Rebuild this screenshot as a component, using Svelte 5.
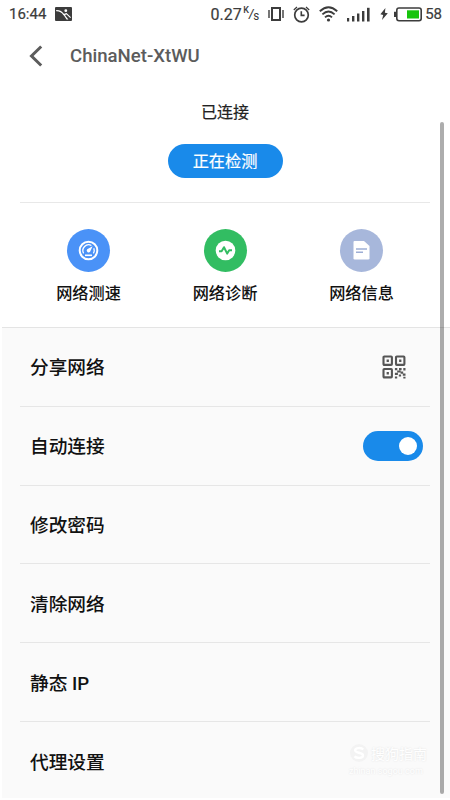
<script>
    let autoConnect = true;

    const tools = [
        { id: 'speed', label: '网络测速' },
        { id: 'diagnose', label: '网络诊断' },
        { id: 'info', label: '网络信息' }
    ];

    const settings = [
        { label: '分享网络', control: 'qr' },
        { label: '自动连接', control: 'switch' },
        { label: '修改密码' },
        { label: '清除网络' },
        { label: '静态 IP' },
        { label: '代理设置' }
    ];
</script>

<main>
    <div class="status">
        <span class="time">16:44</span>
        <svg class="photo" width="17" height="14" viewBox="0 0 17 14">
            <rect width="17" height="14" rx="1" fill="#3c3c3c"/>
            <path d="M1.2 3.6C4.6 3.4 7.2 5.2 8.8 7.6L11.4 6.6L15.6 10.6" fill="none" stroke="#fff" stroke-width="1.2"/>
            <path d="M8.3 7.4L10.6 6.9L10.2 8.6L13.4 12.4H11.6Z" fill="#fff"/>
            <circle cx="10.8" cy="3.7" r="1.4" fill="#fff"/>
        </svg>
        <span class="rate">0.27</span>
        <span class="unit"><sup>K</sup><i>/</i><sub>S</sub></span>
        <svg class="vibrate" width="16" height="14" viewBox="0 0 16 14">
            <rect x="4" y="1" width="8" height="12" fill="none" stroke="#3c3c3c" stroke-width="2"/>
            <path d="M1 3v8M15 3v8" stroke="#3c3c3c" stroke-width="1.4"/>
        </svg>
        <svg class="alarm" width="17" height="17" viewBox="0 0 17 17" fill="none" stroke="#3c3c3c">
            <circle cx="8.5" cy="9" r="6.8" stroke-width="1.7"/>
            <path d="M8.3 5.2v4.2h3.3" stroke-width="1.6"/>
            <path d="M.8 4L4 1.1M13 1.1L16.2 4" stroke-width="1.3"/>
        </svg>
        <svg class="wifi" width="19" height="16" viewBox="0 0 19 16" fill="none" stroke="#3c3c3c" stroke-width="1.9">
            <path d="M.8 5.2Q9.5-2.8 18.2 5.2M3.4 8.4Q9.5 2.8 15.6 8.4M6 11.4Q9.5 8.2 13 11.4"/>
            <circle cx="9.5" cy="14" r="1.6" fill="#3c3c3c" stroke="none"/>
        </svg>
        <svg class="signal" width="23" height="15" viewBox="0 0 23 15" fill="#3c3c3c">
            <rect x="0" y="11" width="2.2" height="3.5"/>
            <rect x="5" y="9" width="2.4" height="5.5"/>
            <rect x="10" y="6.5" width="2.4" height="8"/>
            <rect x="15" y="4" width="2.4" height="10.5"/>
            <rect x="20" y=".8" width="2.6" height="13.7"/>
        </svg>
        <svg class="bolt" width="8" height="12" viewBox="0 0 8 12">
            <path d="M5.4 0L.4 6.3L3.2 6.9L2 12L7.8 5.2L4.9 4.7Z" fill="#3c3c3c"/>
        </svg>
        <svg class="battery" width="28" height="15" viewBox="0 0 28 15">
            <rect x="2.8" y="1" width="24.4" height="12.8" rx="2.2" fill="none" stroke="#3c3c3c" stroke-width="1.6"/>
            <path d="M1 4.8v5.2" stroke="#3c3c3c" stroke-width="2"/>
            <rect x="13" y="3.3" width="12" height="8.2" fill="#17c40c"/>
        </svg>
        <span class="percent">58</span>
    </div>

    <header>
        <svg width="14" height="22" viewBox="0 0 14 22">
            <path d="M12.2 1.5L2.5 11L12.2 20.5" fill="none" stroke="#5c5c5c" stroke-width="3"/>
        </svg>
        <h1>ChinaNet-XtWU</h1>
    </header>

    <section class="connection">
        <p>已连接</p>
        <button>正在检测</button>
    </section>

    <section class="tools">
        {#each tools as tool}
            <div class="tool">
                <div class="circle {tool.id}">
                    {#if tool.id === 'speed'}
                        <svg width="21" height="21" viewBox="0 0 21 21">
                            <circle cx="10.5" cy="10.5" r="8.8" fill="none" stroke="#fff" stroke-width="2"/>
                            <path d="M5.6 13.4A5.8 5.8 0 0 1 13.4 5.5M15.8 8.2A5.8 5.8 0 0 1 15.4 13.4" fill="none" stroke="#fff" stroke-width="1.3"/>
                            <path d="M7 15.3h7" stroke="#fff" stroke-width="1.6"/>
                            <path d="M14.6 6.2L12.1 11.7A1.8 1.8 0 1 1 9.2 9.2Z" fill="#fff"/>
                        </svg>
                    {:else if tool.id === 'diagnose'}
                        <svg width="21" height="21" viewBox="0 0 21 21">
                            <circle cx="10.5" cy="10.5" r="9.8" fill="#fff"/>
                            <path d="M4 11.2h2.6L9 7.2L12.2 13.6L14.2 10.2H17" fill="none" stroke="#32bd62" stroke-width="2" stroke-linejoin="round"/>
                        </svg>
                    {:else}
                        <svg width="17" height="19" viewBox="0 0 17 19">
                            <path d="M1.5 0H11L16.5 5V17.2Q16.5 18.5 15 18.5H1.8Q.5 18.5.5 17.2V1Q.5 0 1.5 0Z" fill="#fff"/>
                            <path d="M3 8h11M3 11.3h7" stroke="#9daed5" stroke-width="1.5"/>
                        </svg>
                    {/if}
                </div>
                <span>{tool.label}</span>
            </div>
        {/each}
    </section>

    <ul>
        {#each settings as item}
            <li>
                <span class="label">{item.label}</span>
                {#if item.control === 'qr'}
                    <svg class="qr" width="24" height="24" viewBox="0 0 24 24">
                        <g fill="none" stroke="#555" stroke-width="2.1">
                            <rect x="1.5" y="1.5" width="8.4" height="8.4" rx=".8"/>
                            <rect x="14" y="1.5" width="8.4" height="8.4" rx=".8"/>
                            <rect x="1.5" y="14" width="8.4" height="8.4" rx=".8"/>
                        </g>
                        <path fill="#555" d="M4.6 4.6h2.3v2.3H4.6zM17.1 4.6h2.3v2.3h-2.3zM4.6 17.1h2.3v2.3H4.6zM12.9 13h2.4v2.2h-2.4zM17 13h2.6v2.2H17zM21.3 13h2.2v2.4h-2.2zM15.2 15.4h3.4v2.1h-3.4zM18.6 16.6h2.6v2.1h-2.6zM12.9 17.8h3v2.2h-3zM20.8 18.6h2.7v2.1h-2.7zM12.9 21.4h2.3v2.1h-2.3zM16.8 19.4h2.3v2.2h-2.3zM21.3 21.8h2.2v1.7h-2.2z"/>
                    </svg>
                {:else if item.control === 'switch'}
                    <button class="switch" class:on={autoConnect} aria-label={item.label} on:click={() => (autoConnect = !autoConnect)}>
                        <span class="knob"></span>
                    </button>
                {/if}
            </li>
        {/each}
    </ul>

    <div class="scrollbar"></div>

    <div class="watermark">
        <div class="brand">
            <svg width="20" height="20" viewBox="0 0 20 20" fill="none">
                <circle cx="10" cy="10" r="9" fill="#f3f3f3"/>
                <path d="M14.2 6.5C12.5 4.5 6.2 4.4 6.1 7.4C6 10.3 14 9.2 14 12.4C14 15.5 7.5 15.5 5.5 13.4" stroke="#fff" stroke-width="2.4"/>
            </svg>
            <span>搜狗指南</span>
        </div>
        <small>zhinan.sogou.com</small>
    </div>
</main>

<style>
    :global(body) {
        background: #fff;
    }

    main {
        position: relative;
        width: 450px;
        height: 800px;
        overflow: hidden;
        background: #fff;
        color: #111;
        font-family: Roboto, "Noto Sans CJK SC", sans-serif;
    }

    .status {
        display: flex;
        align-items: center;
        height: 28px;
        padding: 0 8px 0 9px;
        color: #3c3c3c;
        font-size: 16px;
        box-sizing: border-box;
        white-space: nowrap;
    }

    .status svg {
        flex: none;
    }

    .time {
        width: 46px;
        font-size: 15px;
        -webkit-text-stroke: 0.2px #3c3c3c;
    }

    .rate {
        width: 32px;
        margin-left: 139px;
        -webkit-text-stroke: 0.2px #3c3c3c;
    }

    .unit {
        display: flex;
        width: 16px;
        height: 16px;
        margin-left: 1px;
        font-size: 9px;
        line-height: 9px;
        font-weight: 500;
    }

    .unit sup,
    .unit sub {
        font-size: 9px;
    }

    .unit sup {
        align-self: flex-start;
        vertical-align: baseline;
    }

    .unit i {
        align-self: center;
        font-size: 12px;
        line-height: 12px;
    }

    .unit sub {
        align-self: flex-end;
    }

    .vibrate {
        margin-left: 9px;
    }

    .alarm {
        margin-left: 9px;
    }

    .wifi {
        margin-left: 9px;
    }

    .signal {
        margin-left: 9px;
    }

    .bolt {
        margin-left: 10px;
    }

    .battery {
        margin-left: 6px;
    }

    .percent {
        margin-left: 3px;
        font-size: 15px;
        -webkit-text-stroke: 0.2px #3c3c3c;
    }

    header {
        display: flex;
        align-items: center;
        gap: 27px;
        height: 56px;
        padding-left: 29px;
    }

    h1 {
        margin: 0;
        font-size: 18.6px;
        font-weight: 500;
        color: #5c5c5c;
    }

    .connection {
        display: flex;
        flex-direction: column;
        align-items: center;
        height: 101px;
        margin: 0 20px;
        padding-top: 17px;
        border-bottom: 1px solid #e8e8e8;
    }

    .connection p {
        margin: 0 0 19px;
        font-size: 16px;
        line-height: 24px;
        color: #222;
        -webkit-text-stroke: 0.2px #222;
    }

    .connection button {
        width: 115px;
        height: 34px;
        padding: 1px 0 0;
        border: 0;
        border-radius: 17px;
        background: #198aea;
        color: #fff;
        font: 16.2px/33px Roboto, "Noto Sans CJK SC", sans-serif;
        -webkit-text-stroke: 0.2px #fff;
    }

    .tools {
        display: flex;
        justify-content: space-between;
        height: 124px;
        padding: 26px 46px 0 46px;
        box-sizing: border-box;
    }

    .tool {
        display: flex;
        flex-direction: column;
        align-items: center;
        gap: 10px;
        width: 85px;
        font-size: 16.2px;
        font-weight: 500;
        line-height: 24px;
    }

    .circle {
        display: grid;
        place-items: center;
        width: 43px;
        height: 43px;
        border-radius: 50%;
    }

    .speed {
        background: #4a92f7;
    }

    .diagnose {
        background: #32bd62;
    }

    .info {
        background: #a7b7db;
    }

    ul {
        height: 471px;
        margin: 0 0 0 2px;
        padding: 0 20px 0 18px;
        list-style: none;
        background: #fafafa;
        border-top: 1px solid #e4e4e4;
        box-sizing: border-box;
    }

    li {
        display: flex;
        align-items: center;
        justify-content: space-between;
        height: 78.8px;
        padding: 0 7px 0 10px;
        border-bottom: 1px solid #e6e6e6;
        box-sizing: border-box;
        font-size: 18.7px;
        font-weight: 500;
    }

    li:last-child {
        border-bottom: 0;
    }

    .label {
        padding-bottom: 2px;
    }

    .qr {
        margin-right: 17px;
    }

    .switch {
        display: flex;
        align-items: center;
        width: 60px;
        height: 30px;
        padding: 0 6px;
        border: 0;
        border-radius: 15px;
        background: #ccc;
    }

    .switch.on {
        justify-content: flex-end;
        background: #198aea;
    }

    .knob {
        width: 18px;
        height: 18px;
        border-radius: 50%;
        background: #fff;
    }

    .scrollbar {
        position: absolute;
        top: 122px;
        right: 6px;
        width: 4px;
        height: 672px;
        border-radius: 2px;
        background: rgba(0, 0, 0, 0.32);
    }

    .watermark {
        position: absolute;
        left: 349px;
        top: 743px;
        color: #fff;
        text-shadow: 0 0 2px #dedede;
    }

    .brand {
        display: flex;
        align-items: center;
        gap: 2px;
        height: 20px;
        font-size: 14px;
    }

    .watermark small {
        display: block;
        margin-top: 3px;
        font-size: 9px;
        line-height: 10px;
    }
</style>
